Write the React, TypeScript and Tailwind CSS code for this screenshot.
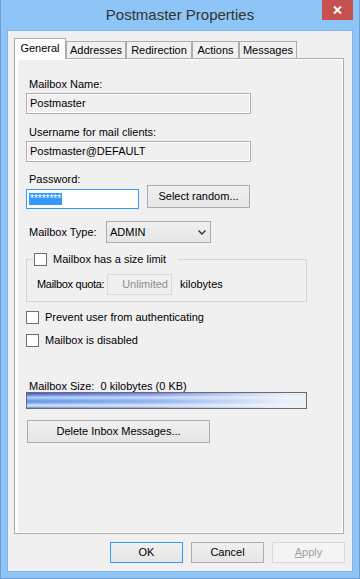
import React from "react";

const btn =
  "flex items-center justify-center border border-[#acacac] bg-[linear-gradient(#f0f0f0,#e5e5e5)] leading-[13px]";

function TextBox({ value, className = "" }: { value: string; className?: string }) {
  return (
    <div
      className={`h-[21px] border border-[#abadb3] bg-[#f0f0f0] shadow-[inset_0_0_0_1px_#fff] flex items-center pl-[3px] leading-[13px] ${className}`}
    >
      {value}
    </div>
  );
}

function Check({ label, className = "" }: { label: string; className?: string }) {
  return (
    <div className={`flex items-center ${className}`}>
      <div className="w-[13px] h-[13px] border border-[#707070] bg-white" />
      <span className="ml-[6px] leading-[13px]">{label}</span>
    </div>
  );
}

const tabs = [
  { name: "Addresses", w: "w-[60px]" },
  { name: "Redirection", w: "w-[66px]" },
  { name: "Actions", w: "w-[47px]" },
  { name: "Messages", w: "w-[58px]" },
];

export default function App() {
  return (
    <div className="w-[360px] h-[579px] bg-[#8cc5f6] border-x border-b border-[#6d9fd1] px-[6px] pb-[6px] flex flex-col font-['Liberation_Sans',Arial,sans-serif]">
      {/* Title bar */}
      <div className="h-[30px] shrink-0 grid grid-cols-[1fr_auto_1fr] items-start">
        <div />
        <div className="text-[15px] leading-[30px] text-[#333]">Postmaster Properties</div>
        <div className="justify-self-end w-[31px] h-[20px] bg-[#c75050] flex items-center justify-center">
          <svg width="9" height="8" viewBox="0 0 9 8">
            <path d="M1 0.5 L8 7.5 M8 0.5 L1 7.5" stroke="#fff" strokeWidth="2" />
          </svg>
        </div>
      </div>

      {/* Client area */}
      <div className="flex-1 border border-[#7eb4e6] bg-[#f0f0f0] flex flex-col pl-[6px] pr-[8px] pt-[7px] text-[11px] text-black">
        {/* Tabs */}
        <div className="h-[20px] flex items-end relative z-10">
          <div className="w-[52px] h-[21px] -mb-px border border-b-0 border-[#acacac] bg-white flex items-center justify-center pb-[2px]">
            General
          </div>
          {tabs.map((t) => (
            <div
              key={t.name}
              className={`${t.w} h-[17px] border border-b-0 border-[#acacac] bg-[#f0f0f0] flex items-center justify-center`}
            >
              {t.name}
            </div>
          ))}
        </div>

        {/* Panel */}
        <div className="h-[476px] border border-[#acacac] bg-white pl-[3px] pt-px pr-px pb-px flex flex-col">
          <div className="flex-1 bg-[#f0f0f0] pl-[8px] pt-[18px]">
            <div className="pl-[3px] leading-[13px]">Mailbox Name:</div>
            <TextBox value="Postmaster" className="mt-[2px] w-[225px]" />

            <div className="pl-[3px] leading-[13px] mt-[12px]">Username for mail clients:</div>
            <TextBox value="Postmaster@DEFAULT" className="mt-[2px] w-[225px]" />

            <div className="pl-[3px] leading-[12px] mt-[11px]">Password:</div>
            <div className="flex items-start">
              <div className="mt-[4px] w-[113px] h-[20px] border border-[#3399ff] bg-white flex items-center pl-[2px]">
                <span className="bg-[#3399ff] text-white leading-[12px] px-px text-[10px]">********</span>
              </div>
              <div className={`${btn} ml-[8px] w-[103px] h-[23px]`}>Select random...</div>
            </div>

            <div className="mt-[12px] flex items-center">
              <div className="w-[80px] pl-[3px] leading-[13px]">Mailbox Type:</div>
              <div className="w-[105px] h-[22px] border border-[#acacac] bg-[linear-gradient(#f0f0f0,#e5e5e5)] flex items-center justify-between pl-[3px] pr-[4px]">
                <span className="leading-[13px]">ADMIN</span>
                <svg width="8" height="5" viewBox="0 0 8 5">
                  <path d="M0.5 0.5 L4 4 L7.5 0.5" stroke="#333" strokeWidth="1.4" fill="none" />
                </svg>
              </div>
            </div>

            <fieldset className="mt-[10px] w-[281px] border border-[#d5d5d5] pl-[10px] pt-[8px] pb-[6px]">
              <legend className="ml-[-4px] pl-px pr-[12px]">
                <span className="flex items-center">
                  <span className="w-[13px] h-[13px] border border-[#707070] bg-white" />
                  <span className="ml-[6px] leading-[13px]">Mailbox has a size limit</span>
                </span>
              </legend>
              <div className="flex items-center">
                <div className="w-[70px] shrink-0 whitespace-nowrap leading-[13px] tracking-[-0.3px]">Mailbox quota:</div>
                <div className="w-[65px] h-[21px] shrink-0 border border-[#d9d9d9] bg-[#f0f0f0] flex items-center justify-end pr-[3px] text-[#8d8d8d] leading-[13px]">
                  Unlimited
                </div>
                <div className="ml-[8px] leading-[13px]">kilobytes</div>
              </div>
            </fieldset>

            <Check label="Prevent user from authenticating" className="mt-[9px]" />
            <Check label="Mailbox is disabled" className="mt-[10px]" />

            <div className="mt-[33px] pl-[3px] leading-[12px] whitespace-pre">Mailbox Size:  0 kilobytes (0 KB)</div>
            <div className="w-[281px] h-[17px] border border-[#6b6b6b] bg-[linear-gradient(to_right,rgba(240,244,250,0)_0%,rgba(240,244,250,0.3)_45%,rgba(240,244,250,0.95)_93%),linear-gradient(to_bottom,#3d4fcf_0%,#6f8fe6_15%,#b6d0f7_30%,#5f8fe6_55%,#8fb6f2_70%,#d9e8fb_85%,#6b86d8_100%)]" />

            <div className={`${btn} mt-[11px] ml-px w-[183px] h-[23px]`}>Delete Inbox Messages...</div>
          </div>
        </div>

        {/* Dialog buttons */}
        <div className="mt-[8px] -mr-px h-[21px] flex justify-end gap-[8px]">
          <div className={`${btn} w-[73px] h-[21px] !border-[#3399ff]`}>OK</div>
          <div className={`${btn} w-[73px] h-[21px]`}>Cancel</div>
          <div className="w-[73px] h-[21px] border border-[#d9d9d9] bg-[#f4f4f4] flex items-center justify-center text-[#a0a0a0] leading-[13px]">
            <span>
              <span className="underline">A</span>pply
            </span>
          </div>
        </div>
      </div>
    </div>
  );
}
